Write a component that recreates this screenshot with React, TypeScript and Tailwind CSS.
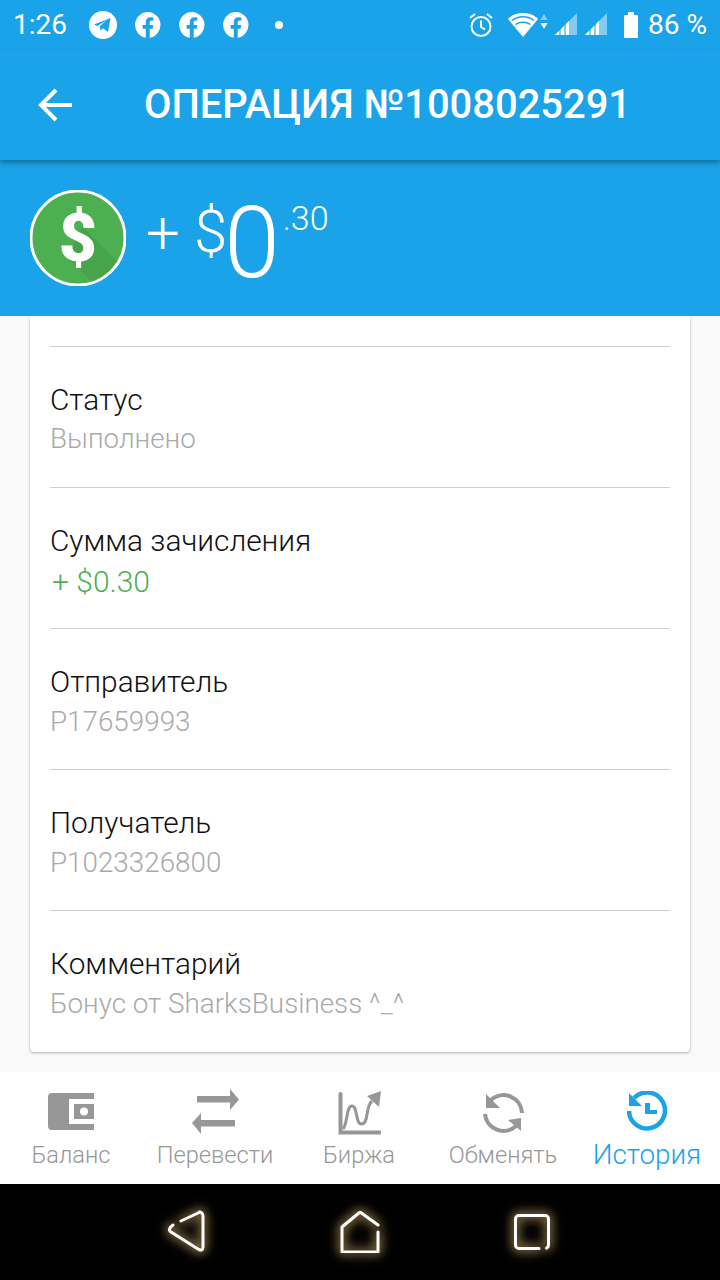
const font = { fontFamily: 'Roboto, sans-serif' }

const rows = [
  { label: 'Статус', value: 'Выполнено', color: 'text-[27.800px] text-[#aaaaaa] mt-[3px]' },
  { label: 'Сумма зачисления', value: '+ $0.30', color: 'text-[30px] text-[#4caf50] mt-[5px] pl-[2px]' },
  { label: 'Отправитель', value: 'P17659993', color: 'text-[27.800px] text-[#aaaaaa] mt-[4px]' },
  { label: 'Получатель', value: 'P1023326800', color: 'text-[27.800px] text-[#aaaaaa] mt-[4px]' },
  { label: 'Комментарий', value: 'Бонус от SharksBusiness ^_^', color: 'text-[27.800px] text-[#aaaaaa] mt-[4px]' },
]

function Facebook() {
  return (
    <svg viewBox="0 0 26 26" className="w-[26px] h-[26px]" fill="white">
      <path d="M13 0a13 13 0 0 0-2.2 25.8v-9.1H7.600V13h3.200v-2.800c0-3.200 1.900-5 4.800-5 1.400 0 2.800.3 2.800.3v3.100h-1.600c-1.600 0-2.100 1-2.100 2V13h3.500l-.6 3.700h-2.900v9.100A13 13 0 0 0 13 0z" />
    </svg>
  )
}

function Signal() {
  return (
    <svg viewBox="0 0 24 24" className="w-[24px] h-[24px] mb-[2px]">
      <path d="M1 23 23 1v22z" fill="white" fillOpacity="0.45" />
      <path d="M1 23 5 19v4zM7 23v-6l3-3v9zM12 23V12l3-3v14z" fill="white" />
    </svg>
  )
}

function StatusBar() {
  return (
    <div className="h-[50px] flex items-center pl-[13px] pr-[13px] text-white">
      <span className="text-[28px] leading-none w-[76px]">1:26</span>
      <div className="flex items-center gap-[18px]">
        <svg viewBox="0 0 28 28" className="w-[28px] h-[28px]">
          <circle cx="14" cy="14" r="14" fill="white" />
          <path d="M5 13.500 21.500 7 19 21l-5-3.700-2.500 2.400-.6-4.600L18 9l-9.500 6z" fill="#1ba3e9" />
        </svg>
        <Facebook />
        <Facebook />
        <Facebook />
        <span className="w-[8px] h-[8px] rounded-full bg-white ml-[8px]" />
      </div>
      <div className="ml-auto flex items-center">
        <svg viewBox="0 0 26 26" className="w-[26px] h-[26px]" fill="none" stroke="white" strokeWidth="2">
          <circle cx="13" cy="14.500" r="9.500" />
          <path d="M13 8.500v6.500l4 2.500M2 6l5-4M24 6l-5-4" />
        </svg>
        <svg viewBox="0 0 40 26" className="w-[40px] h-[26px] ml-[14px]">
          <path d="M0 7C7-1 23-1 30 7L15 25z" fill="white" />
          <path d="M4 8.500c6-5 16-5 22 0M7.500 12.500c4-3 11-3 15 0" stroke="#1ba3e9" strokeWidth="1.500" fill="none" />
          <path d="M36 2l3.500 6h-7z" fill="white" fillOpacity="0.45" />
          <path d="M36 17l3.500-6h-7z" fill="white" />
        </svg>
        <div className="ml-[6px]">
          <Signal />
        </div>
        <div className="ml-[6px]">
          <Signal />
        </div>
        <svg viewBox="0 0 16 26" className="w-[16px] h-[26px] ml-[15px]" fill="white">
          <path d="M5 0h6v3h3a2 2 0 0 1 1 1v21a1 1 0 0 1-1 1H2a1 1 0 0 1-1-1V4a1 1 0 0 1 1-1h3z" />
        </svg>
        <span className="text-[28px] leading-none ml-[9px]">86 %</span>
      </div>
    </div>
  )
}

function Header() {
  return (
    <div className="relative z-10 h-[110px] flex items-center bg-[#1ba3e9] shadow-[0_3px_5px_rgba(0,0,0,0.3)] text-white">
      <svg viewBox="0 0 36 36" className="ml-[38px] w-[36px] h-[36px]" fill="none" stroke="white" strokeWidth="4">
        <path d="M34 18H4M18 3 3 18l15 15" />
      </svg>
      <h1 className="ml-[70px] text-[39.900px] font-medium leading-none">ОПЕРАЦИЯ №1008025291</h1>
    </div>
  )
}

function Amount() {
  return (
    <div className="h-[156px] bg-[#1ba3e9] flex items-start pl-[30px] text-white font-light">
      <svg viewBox="0 0 96 96" className="w-[96px] h-[96px] mt-[30px]">
        <circle cx="48" cy="48" r="47" fill="#4caf50" stroke="white" strokeWidth="3" />
        <path d="M52 36 88 72a46 46 0 0 1-26 20L38 68z" fill="#000" fillOpacity="0.06" />
        <text x="48" y="71" textAnchor="middle" fontSize="66" fontWeight="900" fill="white" fontFamily="Roboto, sans-serif">$</text>
      </svg>
      <span className="ml-[20px] mt-[43px] text-[60px] leading-none">+</span>
      <span className="ml-[14px] mt-[42px] text-[60px] leading-none">$</span>
      <span className="-ml-[3px] mt-[33px] text-[100px] leading-none">0</span>
      <span className="ml-[3px] mt-[41px] text-[34px] leading-none">.30</span>
    </div>
  )
}

function Card() {
  return (
    <div className="mx-[30px] bg-white rounded-b-[4px] shadow-[0_1px_3px_rgba(0,0,0,0.3)]">
      <div className="h-[30px]" />
      {rows.map((row) => (
        <div key={row.label} className="mx-[20px] h-[141px] border-t-[1px] border-[#d0d0d0] pt-[35px]">
          <div className="text-[29.800px] leading-[36px] font-light text-[#111]">{row.label}</div>
          <div className={`leading-[36px] font-light ${row.color}`}>{row.value}</div>
        </div>
      ))}
      <div className="h-[1px]" />
    </div>
  )
}

const gray = '#979797'

function NavBar() {
  const items = [
    {
      label: 'Баланс',
      icon: (
        <svg viewBox="0 0 46 37" className="w-[46px] h-[37px]" fill={gray}>
          <path d="M4 0h42v6H21v25h25v6H4a4 4 0 0 1-4-4V4a4 4 0 0 1 4-4z" />
          <path fillRule="evenodd" d="M26 11h20v15H26zm10 3.500a4 4 0 1 0 0 8 4 4 0 0 0 0-8z" />
        </svg>
      ),
    },
    {
      label: 'Перевести',
      icon: (
        <svg viewBox="0 0 47 45" className="w-[47px] h-[45px]" fill={gray}>
          <path d="M5 7h33V0l9 10.500L38 21v-7.500H5zM43 31v6.500H9V45L0 34l9-10v7z" />
        </svg>
      ),
    },
    {
      label: 'Биржа',
      icon: (
        <svg viewBox="0 0 43 44" className="w-[43px] h-[44px] mt-[4px]" fill="none" stroke={gray}>
          <path d="M2.500 3v38.500h39" strokeWidth="4" strokeLinecap="round" />
          <path d="M5 38C10 32 8 15 14 15c6 0 3 19 10 18 7-1 3-17 10-23" strokeWidth="3" />
          <path d="M43 0 29 5l12 11z" fill={gray} stroke="none" />
        </svg>
      ),
    },
    {
      label: 'Обменять',
      icon: (
        <svg viewBox="0 0 41 40" className="w-[41px] h-[40px] mt-[4px]" fill="none" stroke={gray} strokeWidth="4">
          <path d="M39 20A18.500 18.500 0 0 0 8 7" />
          <path d="M2 21a18.500 18.500 0 0 0 31 12" />
          <path d="M3 1v14h14zM38 38V25l-13 2z" fill={gray} stroke="none" />
        </svg>
      ),
    },
    {
      label: 'История',
      active: true,
      icon: (
        <svg viewBox="0 0 40 40" className="w-[40px] h-[40px]" fill="none" stroke="#1ba3e9" strokeWidth="4.500">
          <path d="M7 7A18 18 0 1 1 2 20" />
          <path d="M2 2v13h13zM18 12h5v7h7v4H18z" fill="#1ba3e9" stroke="none" />
        </svg>
      ),
    },
  ]
  return (
    <div className="h-[112px] bg-white grid grid-cols-5">
      {items.map((item) => (
        <div key={item.label} className="flex flex-col items-center pt-[16px] -translate-x-[1px]">
          <div className="h-[46px] flex items-center justify-center">{item.icon}</div>
          <span className={item.active ? 'mt-[3px] text-[27.800px] leading-[36px] font-light text-[#1ba3e9]' : 'mt-[5px] text-[23.700px] leading-[32px] font-light text-[#979797]'}>
            {item.label}
          </span>
        </div>
      ))}
    </div>
  )
}

function SoftKeys() {
  const glow = '[filter:drop-shadow(0_0_5px_rgba(255,205,130,0.8))_drop-shadow(0_0_6px_rgba(255,205,130,0.5))]'
  return (
    <div className="h-[96px] bg-black grid grid-cols-3 px-[102px]">
      <div className="flex items-center justify-center">
        <svg viewBox="0 0 40 44" className={`w-[40px] h-[44px] -translate-x-[1px] ${glow}`} fill="none" stroke="white" strokeWidth="3" strokeLinecap="round" strokeLinejoin="round">
          <path d="M6 15C3 17 1 20 4 22L31 39C34 41 36 40 36 37V6C36 3 33 1 31 3L14 11" />
        </svg>
      </div>
      <div className="flex items-center justify-center">
        <svg viewBox="0 0 40 42" className={`w-[40px] h-[42px] ${glow}`} fill="none" stroke="white" strokeWidth="3" strokeLinecap="round" strokeLinejoin="round">
          <path d="M38 14 20 1 2 16v25h36V21" />
        </svg>
      </div>
      <div className="flex items-center justify-center">
        <svg viewBox="0 0 36 36" className={`w-[36px] h-[36px] ${glow}`} fill="none" stroke="white" strokeWidth="3" strokeLinecap="round">
          <path d="M25 34.500H5a3.500 3.500 0 0 1-3.500-3.500V5A3.500 3.500 0 0 1 5 1.500h26A3.500 3.500 0 0 1 34.500 5v26a3.500 3.500 0 0 1-2 3.200" />
        </svg>
      </div>
    </div>
  )
}

export default function App() {
  return (
    <div className="w-[720px] h-[1280px] flex flex-col overflow-hidden bg-[#fafafa]" style={font}>
      <div className="bg-[#1ba3e9]">
        <StatusBar />
        <Header />
        <Amount />
      </div>
      <div className="h-[756px] overflow-hidden">
        <Card />
      </div>
      <NavBar />
      <SoftKeys />
    </div>
  )
}
